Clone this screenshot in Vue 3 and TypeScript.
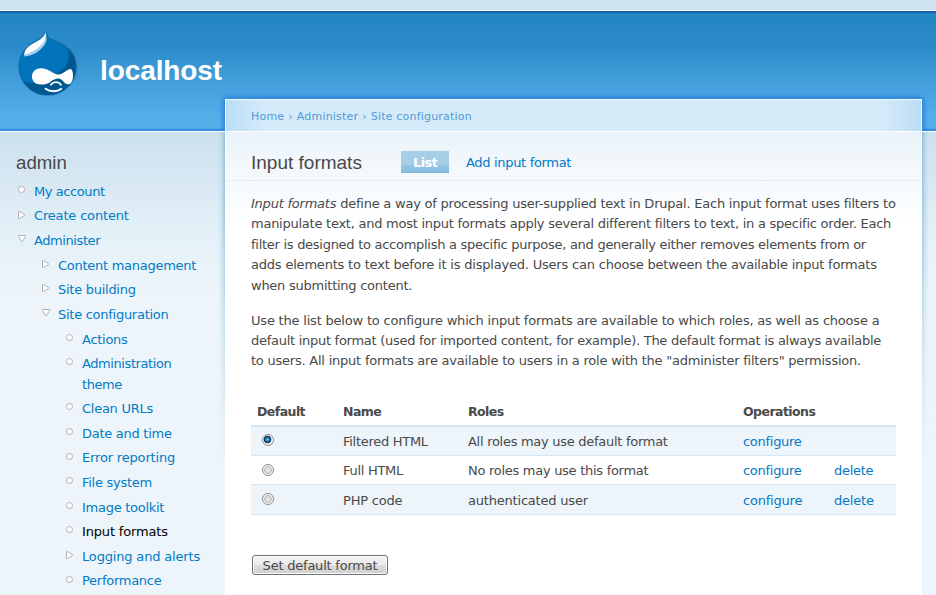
<script setup lang="ts">
import { ref } from 'vue'

interface MenuItem {
  label: string
  marker: 'leaf' | 'collapsed' | 'expanded'
  level: number
  active?: boolean
  fit?: 'tight' | 'loose'
}

interface FormatRow {
  name: string
  roles: string
  removable: boolean
}

const menu: MenuItem[] = [
  { label: 'My account', marker: 'leaf', level: 0, fit: 'tight' },
  { label: 'Create content', marker: 'collapsed', level: 0, fit: 'loose' },
  { label: 'Administer', marker: 'expanded', level: 0, fit: 'tight' },
  { label: 'Content management', marker: 'collapsed', level: 1 },
  { label: 'Site building', marker: 'collapsed', level: 1 },
  { label: 'Site configuration', marker: 'expanded', level: 1 },
  { label: 'Actions', marker: 'leaf', level: 2 },
  { label: 'Administration\ntheme', marker: 'leaf', level: 2, fit: 'tight' },
  { label: 'Clean URLs', marker: 'leaf', level: 2 },
  { label: 'Date and time', marker: 'leaf', level: 2 },
  { label: 'Error reporting', marker: 'leaf', level: 2, fit: 'loose' },
  { label: 'File system', marker: 'leaf', level: 2 },
  { label: 'Image toolkit', marker: 'leaf', level: 2 },
  { label: 'Input formats', marker: 'leaf', level: 2, active: true, fit: 'loose' },
  { label: 'Logging and alerts', marker: 'collapsed', level: 2, fit: 'loose' },
  { label: 'Performance', marker: 'leaf', level: 2 },
]

const formats: FormatRow[] = [
  { name: 'Filtered HTML', roles: 'All roles may use default format', removable: false },
  { name: 'Full HTML', roles: 'No roles may use this format', removable: true },
  { name: 'PHP code', roles: 'authenticated user', removable: true },
]

const selected = ref(0)
</script>

<template>
  <div class="page">
    <div class="strip"></div>
    <header class="header">
      <svg class="logo" width="64" height="70" viewBox="0 0 64 70">
        <ellipse cx="32" cy="39.500" rx="30" ry="29" fill="#1767a6" opacity=".2" />
        <path d="M29.700 3C31 9 34 11 41 14C52 18 60 26 60 39C60 55 47 67 31.500 67C15 67 3 54 3 38C3 27 9 20 18 14C25 10 28.500 8 29.700 3Z" fill="#0073ba" stroke="#1263a0" stroke-width=".8" />
        <path d="M51.500 20C57 25 60 31 60 39C60 55 47 67 31.500 67C21 67 12 61.500 7 53C14 57 27 55 35 48C46 43 57 36 51.500 20Z" fill="#00588f" />
        <path d="M29.700 4C31 10 31 14 28 17.500C24 23 17 28 8.500 28.500C7.500 26 9 21 14 17.500C20 13 27 12 29.700 4Z" fill="#a9cfeb" />
        <path d="M29.700 5C29.500 11 28.500 14 25 17C20 22 14 25.500 8.500 26.500C8.500 23 11 19.500 15 17C21 13.500 27 11.500 29.700 5Z" fill="#fff" />
        <path d="M25 40.300C33 40.300 37 46.500 42.300 46.500C47 46.500 51 41 55 41C57.500 43 58 51 55 55C52 58 49 55.500 46.500 52.500C44 50 41 50 38.500 51.500C34 54.500 31 56.500 25 56.500C19 56.500 16 53 16 48.500C16 43.500 20 40.300 25 40.300Z" fill="#fff" />
        <path d="M34.800 56.500C37.500 52.500 43 52.500 45 56.500" fill="none" stroke="#00588f" stroke-width="4" />
        <path d="M34.800 56.800C37.500 53.300 42.500 53.300 45 56.800" fill="none" stroke="#fff" stroke-width="1.700" stroke-linecap="round" />
        <path d="M29.500 60.800C34 64 41.500 64 45.300 60.800" fill="none" stroke="#fff" stroke-width="1.900" stroke-linecap="round" />
      </svg>
      <h1 class="site-name">localhost</h1>
    </header>
    <div class="columns">
      <nav class="sidebar">
        <h2 class="block-title">admin</h2>
        <ul class="menu">
          <li v-for="item in menu" :key="item.label" :class="['item', 'level-' + item.level]">
            <svg class="marker" width="10" height="10" viewBox="0 0 10 10">
              <circle v-if="item.marker === 'leaf'" cx="4.500" cy="4.500" r="3" />
              <path v-else-if="item.marker === 'collapsed'" d="M1.500 1.500V8.500H2.500L7.500 5.500V4.500L2.500 1.500Z" />
              <path v-else d="M1.500 1.500H8.500V2.500L5.500 7.500H4.500L1.500 2.500Z" />
            </svg>
            <a :class="['link', item.fit, { active: item.active }]">{{ item.label }}</a>
          </li>
        </ul>
      </nav>
      <main class="panel">
        <div class="crumbs">
          <a>Home</a><span>›</span><a>Administer</a><span>›</span><a>Site configuration</a>
        </div>
        <div class="title-bar">
          <h2 class="title">Input formats</h2>
          <a class="tab current">List</a>
          <a class="tab">Add input format</a>
        </div>
        <div class="content">
          <div class="para">
            <div class="wide"><em>Input formats</em> define a way of processing user-supplied text in Drupal. Each input format uses filters to</div>
            <div>manipulate text, and most input formats apply several different filters to text, in a specific order. Each</div>
            <div class="narrow">filter is designed to accomplish a specific purpose, and generally either removes elements from or</div>
            <div class="wider">adds elements to text before it is displayed. Users can choose between the available input formats</div>
            <div>when submitting content.</div>
          </div>
          <div class="para">
            <div class="wider">Use the list below to configure which input formats are available to which roles, as well as choose a</div>
            <div class="narrow">default input format (used for imported content, for example). The default format is always available</div>
            <div class="wide">to users. All input formats are available to users in a role with the "administer filters" permission.</div>
          </div>
          <div class="table">
            <div class="row head">
              <span>Default</span><span>Name</span><span>Roles</span><span>Operations</span>
            </div>
            <div v-for="(f, i) in formats" :key="f.name" class="row body">
              <span class="radio-cell"><i :class="['radio', { on: selected === i }]" @click="selected = i"></i></span>
              <span>{{ f.name }}</span>
              <span>{{ f.roles }}</span>
              <a>configure</a>
              <a v-if="f.removable">delete</a>
            </div>
          </div>
          <button class="submit" type="button">Set default format</button>
        </div>
      </main>
    </div>
  </div>
</template>

<style>
body {
  background: #edf5fa;
  overflow: hidden;
}
</style>

<style scoped>
.page {
  width: 936px;
  height: 595px;
  overflow: hidden;
  font: 13px/20.5px 'DejaVu Sans', Verdana, sans-serif;
  letter-spacing: -0.25px;
  color: #494949;
  background: #edf5fa;
}
a {
  color: #027ac6;
  text-decoration: none;
}
.strip {
  height: 10px;
  background: #cde3f1;
  border-bottom: 1px solid #fff;
}
.header {
  box-sizing: border-box;
  height: 120px;
  display: flex;
  align-items: flex-start;
  padding: 17px 0 0 16px;
  background:
    linear-gradient(#0d4fa0, #2385c2cc 3px, transparent 6px),
    linear-gradient(transparent 116px, #2b84dc 120px),
    linear-gradient(#2385c2, #2b8bc9 35px, #48a4e0 80px, #56b1eb 112px);
}
.logo {
  flex: none;
}
.site-name {
  margin: 27px 0 0 20px;
  font: bold 28px/32px 'Liberation Sans', sans-serif;
  letter-spacing: -0.1px;
  color: #fff;
}
.columns {
  display: grid;
  grid-template-columns: 225px 697px 14px;
  height: 464px;
  box-sizing: border-box;
  border-top: 1px solid #fff;
  background: linear-gradient(#cbe1ef, #d8e8f3 50px, #e4f1f8 105px, #edf5fa 160px);
}
.sidebar {
  padding: 20px 0 0 16px;
}
.block-title {
  margin: 0;
  font: 18.7px/22px 'Liberation Sans', sans-serif;
  letter-spacing: 0;
}
.menu {
  list-style: none;
  margin: 0;
  padding: 7.85px 0 0;
}
.item {
  display: flex;
  align-items: flex-start;
  margin-bottom: 4.12px;
}
.level-1 {
  padding-left: 24px;
}
.level-2 {
  padding-left: 48px;
}
.marker {
  flex: none;
  margin: 3.15px 8px 0 1px;
  fill: #fff;
  stroke: #b3aeb4;
  stroke-width: 1;
}
.link {
  white-space: pre;
  margin-left: -1px;
  letter-spacing: -0.27px;
}
.link.tight {
  letter-spacing: -0.42px;
}
.link.loose {
  letter-spacing: -0.17px;
}
.link.active {
  color: #000;
}
.panel {
  position: relative;
  margin-top: -33px;
  height: 497px;
  background: #fff;
}
.panel::before,
.panel::after {
  content: '';
  position: absolute;
  top: 33px;
  width: 7px;
  height: 330px;
}
.panel::before {
  right: 100%;
  background: linear-gradient(to left, #8dbcd8, #b2d4e7aa 3px, transparent);
  mask-image: linear-gradient(#000, transparent);
}
.panel::after {
  left: 100%;
  background: linear-gradient(to right, #8dbcd8, #b2d4e7aa 3px, transparent);
  mask-image: linear-gradient(#000, transparent);
}
.crumbs {
  box-sizing: border-box;
  height: 32px;
  display: flex;
  align-items: center;
  gap: 4px;
  padding: 3px 0 0 25px;
  border: 1px solid #f4faff;
  border-bottom: 0;
  background: linear-gradient(to right, #bbddf5, #d5ebf9 38px, #d5ebf9 655px, #bbddf5);
  box-shadow: 0 0 6px 1px #1b72d5;
  clip-path: inset(-8px -8px 0 -8px);
  font-size: 11px;
  line-height: 16px;
  letter-spacing: 0.19px;
  color: #5a9dcc;
}
.crumbs a {
  color: #529ad6;
}
.title-bar {
  box-sizing: border-box;
  height: 50px;
  display: flex;
  align-items: center;
  padding: 12px 0 0 25px;
  border: 1px solid #fff;
  border-bottom-color: #e8eff4;
  background: linear-gradient(#eaf3fa, #f6fafc);
}
.title {
  margin: 0;
  width: 150px;
  font: 19px/24px 'Liberation Sans', sans-serif;
  letter-spacing: 0;
  padding-top: 1px;
}
.tab {
  box-sizing: border-box;
  height: 22px;
  line-height: 22px;
  padding: 1px 12px 0;
  letter-spacing: -0.32px;
}
.tab.current {
  width: 48px;
  margin-right: 5px;
  font-weight: bold;
  letter-spacing: -0.6px;
  color: #fff;
  background: linear-gradient(#a6cee7 14px, #94c5e4 14px, #8bbfe1 20px, #7eb5dc);
}
.content {
  padding: 13px 26px 0;
  background: linear-gradient(#f4fafd, #fff 42px);
}
.para {
  margin-bottom: 14.500px;
  line-height: 20.4px;
  white-space: nowrap;
}
.wide {
  letter-spacing: -0.226px;
}
.wider {
  letter-spacing: -0.2px;
}
.narrow {
  letter-spacing: -0.275px;
}
.table {
  padding-top: 14.8px;
}
.row {
  display: grid;
  grid-template-columns: 86px 125px 275px 91px 60px;
  padding-left: 6px;
}
.head {
  box-sizing: border-box;
  height: 26px;
  font-size: 12.5px;
  font-weight: bold;
  line-height: 21px;
  letter-spacing: -0.55px;
  border-bottom: 2px solid #d3e7f4;
}
.body {
  height: 28px;
  line-height: 30px;
  letter-spacing: -0.28px;
  border-bottom: 1px solid #d3e7f4;
}
.body:last-child {
  height: 29px;
  line-height: 32px;
  letter-spacing: -0.2px;
}
.body:nth-child(even) {
  background: #edf5fa;
}
.radio-cell {
  padding: 8px 0 0 5px;
}
.body:nth-child(2) .radio-cell {
  padding-top: 7px;
}
.radio {
  display: block;
  box-sizing: border-box;
  width: 12px;
  height: 12px;
  border: 1px solid #8b8d90;
  border-radius: 50%;
  background: radial-gradient(circle at 5px 5px, #e9e9e9, #dadada 2.500px, #bcbcbc 3.500px, #f8f8f8 4.300px);
}
.radio.on {
  background: radial-gradient(circle at 4.500px 4.500px, #7fd6f5 0, #1f78b4 1.800px, #0b2c4b 3.500px, #f8f8f8 4.200px);
}
.submit {
  display: block;
  box-sizing: border-box;
  width: 136px;
  height: 20px;
  margin: 40px 0 0 1px;
  padding: 1px 0 0;
  border: 1px solid #707070;
  border-radius: 3px;
  background: linear-gradient(#f2f2f2, #ebebeb 50%, #dddddd 50%, #cfcfcf);
  box-shadow: inset 0 0 0 1px #fcfcfc;
  font: 13px/17px 'DejaVu Sans', sans-serif;
  letter-spacing: -0.22px;
  color: #494949;
  white-space: nowrap;
}
</style>
